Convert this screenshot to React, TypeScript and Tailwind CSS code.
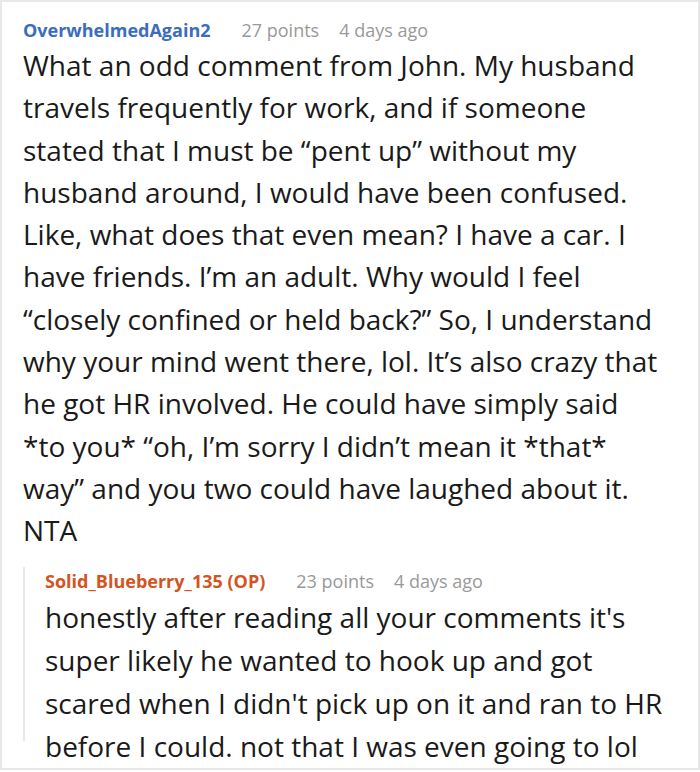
import React from "react";

export default function App() {
  return (
    <div className="w-[700px] h-[772px] bg-white">
      <div className="w-[700px] h-[770px] border-2 border-[#e8e8e8] bg-white pl-[21px] pr-[10px] pt-[14px] overflow-hidden font-['Open_Sans','Noto_Sans',sans-serif]">
        <div className="flex items-baseline h-[28px] leading-[28px] text-[18px]">
          <span className="font-bold text-[#3a6cbf]">OverwhelmedAgain2</span>
          <span className="ml-[31px] text-[#999999]">27 points</span>
          <span className="ml-[20px] text-[#999999]">4 days ago</span>
        </div>
        <p className="text-[28px] leading-[42.3px] text-[#1a1a1a] whitespace-nowrap">
          What an odd comment from John. My husband
          <br />
          travels frequently for work, and if someone
          <br />
          stated that I must be “pent up” without my
          <br />
          husband around, I would have been confused.
          <br />
          Like, what does that even mean? I have a car. I
          <br />
          have friends. I’m an adult. Why would I feel
          <br />
          “closely confined or held back?” So, I understand
          <br />
          why your mind went there, lol. It’s also crazy that
          <br />
          he got HR involved. He could have simply said
          <br />
          *to you* “oh, I’m sorry I didn’t mean it *that*
          <br />
          way” and you two could have laughed about it.
          <br />
          NTA
        </p>
        <div className="mt-[27px] h-[174px] border-l-2 border-[#e8e8e8] pl-[20px]">
          <div className="-mt-[12px] flex items-baseline h-[28px] leading-[28px] text-[18px]">
            <span className="font-bold text-[#d4541f]">Solid_Blueberry_135 (OP)</span>
            <span className="ml-[31px] text-[#999999]">23 points</span>
            <span className="ml-[20px] text-[#999999]">4 days ago</span>
          </div>
          <p className="mt-[1px] text-[28px] leading-[43px] text-[#1a1a1a] whitespace-nowrap">
            honestly after reading all your comments it's
            <br />
            super likely he wanted to hook up and got
            <br />
            scared when I didn't pick up on it and ran to HR
            <br />
            before I could. not that I was even going to lol
          </p>
        </div>
      </div>
    </div>
  );
}
